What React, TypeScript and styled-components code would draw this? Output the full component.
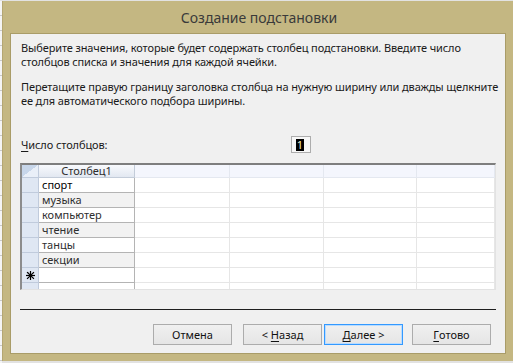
import React from 'react'
import styled, { createGlobalStyle } from 'styled-components'

const GlobalStyle = createGlobalStyle`
    html, body {
        margin: 0;
        padding: 0;
    }
    body {
        width: 513px;
        height: 363px;
        overflow: hidden;
        background: #e2e2e2;
        font-family: 'Noto Sans', 'Liberation Sans', sans-serif;
        color: #1a1a1a;
    }
`

const values = ['спорт', 'музыка', 'компьютер', 'чтение', 'танцы', 'секции']
const emptyCols = 4

const Star = () => (
    <svg width='9' height='9' viewBox='0 0 9 9'>
        <g stroke='#000' strokeWidth='1.2' strokeLinecap='square'>
            <line x1='4.5' y1='0.5' x2='4.5' y2='8.5' />
            <line x1='0.5' y1='4.5' x2='8.5' y2='4.5' />
            <line x1='1.5' y1='1.5' x2='7.5' y2='7.5' />
            <line x1='7.5' y1='1.5' x2='1.5' y2='7.5' />
        </g>
    </svg>
)

const App = () => {
    const rows = [...values, '']
    return (
        <Screen>
            <GlobalStyle />
            <BackWindow />
            <Dialog>
                <TitleBar>Создание подстановки</TitleBar>
                <Client>
                    <Para>
                        Выберите значения, которые будет содержать столбец подстановки. Введите число
                        <br />
                        столбцов списка и значения для каждой ячейки.
                    </Para>
                    <Para margin='11px 0 0 0'>
                        Перетащите правую границу заголовка столбца на нужную ширину или дважды щелкните
                        <br />
                        ее для автоматического подбора ширины.
                    </Para>
                    <CountRow>
                        <CountLabel>
                            <u>Ч</u>исло столбцов:
                        </CountLabel>
                        <CountBox>
                            <Selected>1</Selected>
                        </CountBox>
                    </CountRow>
                    <Sheet>
                        <Cell kind='corner' />
                        <Cell kind='mainHead'>Столбец1</Cell>
                        {Array.from({ length: emptyCols }).map((_, i) => (
                            <Cell key={'h' + i} kind='emptyHead' />
                        ))}
                        {rows.map((v, r) => (
                            <React.Fragment key={r}>
                                <Cell kind='selector' center>
                                    {r === rows.length - 1 && <Star />}
                                </Cell>
                                <Cell kind='main' alt={r % 2 === 1} current={r === 0}>
                                    {v}
                                </Cell>
                                {Array.from({ length: emptyCols }).map((_, i) => (
                                    <Cell key={i} kind='empty' />
                                ))}
                            </React.Fragment>
                        ))}
                        <Cell kind='selector' short />
                        <Cell kind='main' short />
                        {Array.from({ length: emptyCols }).map((_, i) => (
                            <Cell key={'p' + i} kind='empty' short />
                        ))}
                    </Sheet>
                    <Separator />
                    <ButtonBar>
                        <Button margin='0 11px 0 0'>Отмена</Button>
                        <Button margin='0 2px 0 0'>
                            &lt; <u>Н</u>азад
                        </Button>
                        <Button margin='0 9px 0 0' primary>
                            <u>Д</u>алее &gt;
                        </Button>
                        <Button>
                            <u>Г</u>отово
                        </Button>
                    </ButtonBar>
                </Client>
            </Dialog>
        </Screen>
    )
}

interface CellProps {
    kind: 'corner' | 'mainHead' | 'emptyHead' | 'selector' | 'main' | 'empty'
    alt?: boolean
    current?: boolean
    center?: boolean
    short?: boolean
}

const cellBg = (p: CellProps) => {
    switch (p.kind) {
        case 'corner':
            return 'linear-gradient(to bottom right, #c7d6ea 50%, #e9eff8 50%)'
        case 'mainHead':
            return 'linear-gradient(#f8fafd, #e2e8f1)'
        case 'emptyHead':
            return '#f4f6fd'
        case 'selector':
            return '#dfe7f3'
        case 'main':
            return p.alt ? '#f2f2f2' : '#ffffff'
        default:
            return '#ffffff'
    }
}

const cellLine = (p: CellProps) => {
    if (p.kind === 'corner' || p.kind === 'selector') return '#c0cbdc'
    if (p.kind === 'mainHead') return '#c3ccd9'
    if (p.kind === 'main') return '#b4b4b4'
    if (p.kind === 'emptyHead') return '#e4e8f0'
    return '#e6e6e6'
}

const Screen = styled.div`
    display: flex;
    width: 513px;
    height: 363px;
    padding-top: 1px;
    box-sizing: border-box;
`

const BackWindow = styled.div`
    width: 2px;
    height: 362px;
    background: repeating-linear-gradient(#f4f4f4 0 14px, #c8c8c8 14px 15px);
`

const Dialog = styled.div`
    display: flex;
    flex-direction: column;
    width: 511px;
    height: 360px;
    box-sizing: border-box;
    padding: 0 7px 7px 7px;
    background: #c4b782;
    border-left: 1px solid #b4a671;
`

const TitleBar = styled.div`
    height: 32px;
    display: flex;
    align-items: center;
    justify-content: center;
    padding-left: 2px;
    font-size: 14px;
    color: #3a3a3a;
`

const Client = styled.div`
    flex: 1;
    box-sizing: border-box;
    background: #f0f0f0;
    border: 1px solid #a99c68;
    padding: 7px 10px 0 10px;
`

const Para = styled.p<{ margin?: string }>`
    margin: ${(props) => (props.margin ? props.margin : '0px')};
    font-size: 11px;
    line-height: 14px;
    letter-spacing: -0.12px;
    white-space: nowrap;
`

const CountRow = styled.div`
    display: flex;
    align-items: center;
    height: 17px;
    margin-top: 28px;
`

const CountLabel = styled.span`
    width: 270px;
    font-size: 11px;
    letter-spacing: -0.1px;
    u {
        text-underline-offset: 2px;
    }
`

const CountBox = styled.div`
    width: 20px;
    height: 17px;
    box-sizing: border-box;
    border: 1px solid #adadad;
    background: #f7f7f7;
    display: flex;
    align-items: center;
    padding-left: 4px;
`

const Selected = styled.span`
    display: inline-block;
    width: 8px;
    height: 12px;
    background: #000;
    color: #fff6c8;
    font-size: 11px;
    line-height: 12px;
    text-align: center;
`

const Sheet = styled.div`
    display: grid;
    grid-template-columns: 17px 96px 95px 94px 93px 78px;
    grid-template-rows: 13px repeat(7, 15px) 6px;
    width: 476px;
    margin: 10px 0 0 -1px;
    box-sizing: border-box;
    border-top: 2px solid #7e7e7e;
    border-left: 2px solid #8c8c8c;
    border-right: 1px solid #e2e2e2;
    border-bottom: 1px solid #e2e2e2;
    background: #fff;
`

const Cell = styled.div<CellProps>`
    box-sizing: border-box;
    min-width: 0;
    min-height: 0;
    background: ${(props) => cellBg(props)};
    border-right: 1px solid ${(props) => cellLine(props)};
    border-bottom: ${(props) => (props.short ? 'none' : `1px solid ${cellLine(props)}`)};
    font-size: 11px;
    line-height: ${(props) => (props.kind === 'mainHead' ? '12px' : '14px')};
    white-space: nowrap;
    overflow: ${(props) => (props.kind === 'mainHead' ? 'visible' : 'hidden')};
    color: ${(props) => (props.current ? '#000' : '#2e2e2e')};
    padding-left: ${(props) => (props.kind === 'main' ? '3px' : '0')};
    text-align: ${(props) => (props.kind === 'mainHead' ? 'center' : 'left')};
    display: ${(props) => (props.center ? 'flex' : 'block')};
    align-items: center;
    justify-content: center;
`

const Separator = styled.div`
    width: 476px;
    height: 1px;
    margin: 19px 0 0 -1px;
    background: #1e1e1e;
`

const ButtonBar = styled.div`
    display: flex;
    justify-content: flex-end;
    margin-top: 14px;
    padding-right: 4px;
`

const Button = styled.div<{ margin?: string; primary?: boolean }>`
    width: 79px;
    height: 21px;
    box-sizing: border-box;
    margin: ${(props) => (props.margin ? props.margin : '0px')};
    display: flex;
    align-items: center;
    justify-content: center;
    font-size: 11px;
    color: #111;
    background: linear-gradient(#f0f0f0, #e5e5e5);
    border: 1px solid ${(props) => (props.primary ? '#3399ff' : '#acacac')};
    box-shadow: ${(props) => (props.primary ? 'inset 0 0 0 1px #b9dcff' : 'none')};
    white-space: pre;
    u {
        text-underline-offset: 2px;
    }
`

export default App
